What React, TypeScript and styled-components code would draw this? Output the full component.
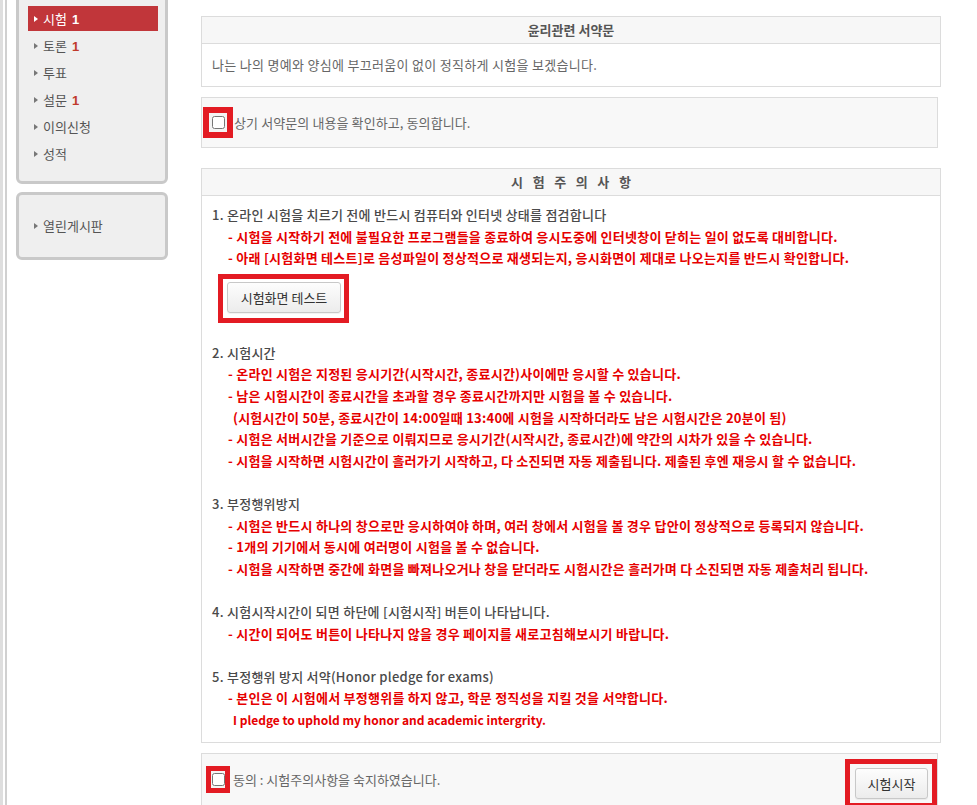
import React from "react";
import styled, { createGlobalStyle } from "styled-components";

const Global = createGlobalStyle`
  html, body { margin: 0; padding: 0; background: #fff; }
  body {
    font-family: "Noto Sans CJK KR", "Noto Sans", sans-serif;
    font-size: 13px;
    color: #555;
  }
  * { box-sizing: border-box; }
`;

const Page = styled.div`
  display: flex;
  align-items: flex-start;
  height: 805px;
  overflow: hidden;
`;

const Rail = styled.div`
  flex: none;
  align-self: stretch;
  width: 7px;
  border-left: 3px solid #dedede;
  border-right: 2px solid #d0d0d0;
  background: #fff;
`;

const Sidebar = styled.aside`
  flex: none;
  width: 152px;
  margin-left: 9px;
  display: flex;
  flex-direction: column;
  gap: 8px;
`;

const MenuBox = styled.div<{ $top?: boolean }>`
  border: 3px solid #c9c9c9;
  border-radius: 6px;
  background: #efefef;
  margin-top: ${(p) => (p.$top ? "-14px" : "0")};
  padding: ${(p) => (p.$top ? "17px 7px 15px 9px" : "18px 7px 19px 9px")};
`;

const MenuItem = styled.div<{ $active?: boolean }>`
  height: 25px;
  margin-bottom: 2px;
  display: flex;
  align-items: center;
  padding-left: 6px;
  gap: 5px;
  font-size: 13px;
  color: ${(p) => (p.$active ? "#fff" : "#555")};
  background: ${(p) => (p.$active ? "#c1363a" : "transparent")};
  &:last-child { margin-bottom: 0; }
`;

const Arrow = styled.span<{ $active?: boolean }>`
  width: 0;
  height: 0;
  border-top: 3px solid transparent;
  border-bottom: 3px solid transparent;
  border-left: 4px solid ${(p) => (p.$active ? "#fff" : "#777")};
`;

const Count = styled.b<{ $active?: boolean }>`
  margin-left: 5px;
  color: ${(p) => (p.$active ? "#fff" : "#c0392b")};
  font-family: "Liberation Sans", Arial, sans-serif;
  font-weight: 700;
`;

const Main = styled.main`
  flex: none;
  width: 740px;
  margin-left: 33px;
  padding-top: 16px;
  display: flex;
  flex-direction: column;
`;

const Panel = styled.section<{ $gap?: number }>`
  border: 1px solid #dcdcdc;
  background: #fff;
  margin-top: ${(p) => p.$gap ?? 0}px;
`;

const PanelHeader = styled.div<{ $spaced?: boolean }>`
  height: 27px;
  line-height: 26px;
  border-bottom: 1px solid #dcdcdc;
  background: #f7f7f7;
  text-align: center;
  font-weight: 700;
  color: #555;
  letter-spacing: ${(p) => (p.$spaced ? "9.6px" : "0")};
  padding-left: ${(p) => (p.$spaced ? "9.6px" : "0")};
`;

const PledgeBody = styled.div`
  padding: 10px;
  line-height: 22px;
  color: #666;
  letter-spacing: 0.3px;
`;

const AgreeBar = styled.div<{ $gap: number }>`
  margin-top: ${(p) => p.$gap}px;
  width: 737px;
  height: 51px;
  border: 1px solid #dcdcdc;
  background: #f8f8f8;
  display: flex;
  align-items: center;
  padding-left: 1px;
`;

const Highlight = styled.span<{ $w: number; $h: number; $b: number }>`
  flex: none;
  display: inline-flex;
  align-items: center;
  justify-content: center;
  width: ${(p) => p.$w}px;
  height: ${(p) => p.$h}px;
  border: ${(p) => p.$b}px solid #e31b23;
  background: #f4f4f4;
`;

const Check = styled.input`
  width: 13px;
  height: 13px;
  margin: 0;
`;

const AgreeText = styled.span<{ $small?: boolean }>`
  margin-left: ${(p) => (p.$small ? 3 : 1)}px;
  color: #666;
  font-size: 13px;
  letter-spacing: ${(p) => (p.$small ? "0" : "0.1px")};
`;

const NoticeBody = styled.div`
  padding: 8px 10px 12px 10px;
  line-height: 21.6px;
  letter-spacing: 0.25px;
`;

const Group = styled.div<{ $gap?: number }>`
  margin-top: ${(p) => p.$gap ?? 0}px;
`;

const Heading = styled.div`
  color: #4a4a4a;
  font-weight: 500;
  height: 21.6px;
`;

const RedLine = styled.div<{ $indent?: number; $latin?: boolean }>`
  color: #e60000;
  font-weight: 700;
  padding-left: ${(p) => p.$indent ?? 16}px;
  height: 21.6px;
  font-size: ${(p) => (p.$latin ? 12 : 13)}px;
  letter-spacing: ${(p) => (p.$latin ? "0" : "0.25px")};
`;

const ButtonFrame = styled.div`
  display: inline-block;
  margin-top: 5px;
  margin-left: 6px;
  border: 5px solid #e31b23;
  padding: 3px 3px 5px 4px;
  background: #fff;
`;

const Button = styled.button<{ $w: number }>`
  display: block;
  width: ${(p) => p.$w}px;
  height: 31px;
  padding: 0;
  border: 1px solid #c8c8c8;
  border-radius: 3px;
  background: linear-gradient(#fdfdfd, #ececec);
  box-shadow: 0 1px 1px rgba(0, 0, 0, 0.06);
  font-family: "Noto Sans CJK KR", sans-serif;
  font-size: 13px;
  color: #333;
`;

const BottomBar = styled.div`
  margin-top: 10px;
  width: 737px;
  border: 1px solid #dcdcdc;
  background: #f8f8f8;
  padding: 5px 0 6px 4px;
  display: flex;
  align-items: flex-start;
`;

const BottomLeft = styled.div`
  flex: 1;
  display: flex;
  align-items: center;
  margin-top: 7px;
`;

const StartFrame = styled.div`
  flex: none;
  border: 5px solid #e31b23;
  padding: 4px 4px 4px 5px;
  background: #f8f8f8;
`;

type Item = { label: string; count?: number; active?: boolean };

const menu: Item[] = [
  { label: "시험", count: 1, active: true },
  { label: "토론", count: 1 },
  { label: "투표" },
  { label: "설문", count: 1 },
  { label: "이의신청" },
  { label: "성적" },
];

type Line = { text: string; indent?: number; latin?: boolean };
type Section = { title: string; lines: Line[]; gap: number };

const sections: Section[] = [
  {
    title: "2. 시험시간",
    gap: 19,
    lines: [
      { text: "- 온라인 시험은 지정된 응시기간(시작시간, 종료시간)사이에만 응시할 수 있습니다." },
      { text: "- 남은 시험시간이 종료시간을 초과할 경우 종료시간까지만 시험을 볼 수 있습니다." },
      { text: "(시험시간이 50분, 종료시간이 14:00일때 13:40에 시험을 시작하더라도 남은 시험시간은 20분이 됨)", indent: 21 },
      { text: "- 시험은 서버시간을 기준으로 이뤄지므로 응시기간(시작시간, 종료시간)에 약간의 시차가 있을 수 있습니다." },
      { text: "- 시험을 시작하면 시험시간이 흘러가기 시작하고, 다 소진되면 자동 제출됩니다. 제출된 후엔 재응시 할 수 없습니다." },
    ],
  },
  {
    title: "3. 부정행위방지",
    gap: 21.6,
    lines: [
      { text: "- 시험은 반드시 하나의 창으로만 응시하여야 하며, 여러 창에서 시험을 볼 경우 답안이 정상적으로 등록되지 않습니다." },
      { text: "- 1개의 기기에서 동시에 여러명이 시험을 볼 수 없습니다." },
      { text: "- 시험을 시작하면 중간에 화면을 빠져나오거나 창을 닫더라도 시험시간은 흘러가며 다 소진되면 자동 제출처리 됩니다." },
    ],
  },
  {
    title: "4. 시험시작시간이 되면 하단에 [시험시작] 버튼이 나타납니다.",
    gap: 21.6,
    lines: [{ text: "- 시간이 되어도 버튼이 나타나지 않을 경우 페이지를 새로고침해보시기 바랍니다." }],
  },
  {
    title: "5. 부정행위 방지 서약(Honor pledge for exams)",
    gap: 21.6,
    lines: [
      { text: "- 본인은 이 시험에서 부정행위를 하지 않고, 학문 정직성을 지킬 것을 서약합니다." },
      { text: "I pledge to uphold my honor and academic intergrity.", indent: 21, latin: true },
    ],
  },
];

export default function App() {
  return (
    <>
      <Global />
      <Page>
        <Rail />
        <Sidebar>
          <MenuBox $top>
            {menu.map((m) => (
              <MenuItem key={m.label} $active={m.active}>
                <Arrow $active={m.active} />
                <span>
                  {m.label}
                  {m.count ? <Count $active={m.active}>{m.count}</Count> : null}
                </span>
              </MenuItem>
            ))}
          </MenuBox>
          <MenuBox>
            <MenuItem>
              <Arrow />
              <span>열린게시판</span>
            </MenuItem>
          </MenuBox>
        </Sidebar>

        <Main>
          <Panel>
            <PanelHeader>윤리관련 서약문</PanelHeader>
            <PledgeBody>나는 나의 명예와 양심에 부끄러움이 없이 정직하게 시험을 보겠습니다.</PledgeBody>
          </Panel>

          <AgreeBar $gap={10}>
            <Highlight $w={30} $h={31} $b={6}>
              <Check type="checkbox" />
            </Highlight>
            <AgreeText>상기 서약문의 내용을 확인하고, 동의합니다.</AgreeText>
          </AgreeBar>

          <Panel $gap={20}>
            <PanelHeader $spaced>시험주의사항</PanelHeader>
            <NoticeBody>
              <Group>
                <Heading>1. 온라인 시험을 치르기 전에 반드시 컴퓨터와 인터넷 상태를 점검합니다</Heading>
                <RedLine>- 시험을 시작하기 전에 불필요한 프로그램들을 종료하여 응시도중에 인터넷창이 닫히는 일이 없도록 대비합니다.</RedLine>
                <RedLine>- 아래 [시험화면 테스트]로 음성파일이 정상적으로 재생되는지, 응시화면이 제대로 나오는지를 반드시 확인합니다.</RedLine>
                <ButtonFrame>
                  <Button $w={114}>시험화면 테스트</Button>
                </ButtonFrame>
              </Group>
              {sections.map((s) => (
                <Group key={s.title} $gap={s.gap}>
                  <Heading>{s.title}</Heading>
                  {s.lines.map((l) => (
                    <RedLine key={l.text} $indent={l.indent} $latin={l.latin}>
                      {l.text}
                    </RedLine>
                  ))}
                </Group>
              ))}
            </NoticeBody>
          </Panel>

          <BottomBar>
            <BottomLeft>
              <Highlight $w={24} $h={27} $b={5}>
                <Check type="checkbox" />
              </Highlight>
              <AgreeText $small>동의 : 시험주의사항을 숙지하였습니다.</AgreeText>
            </BottomLeft>
            <StartFrame>
              <Button $w={73}>시험시작</Button>
            </StartFrame>
          </BottomBar>
        </Main>
      </Page>
    </>
  );
}
